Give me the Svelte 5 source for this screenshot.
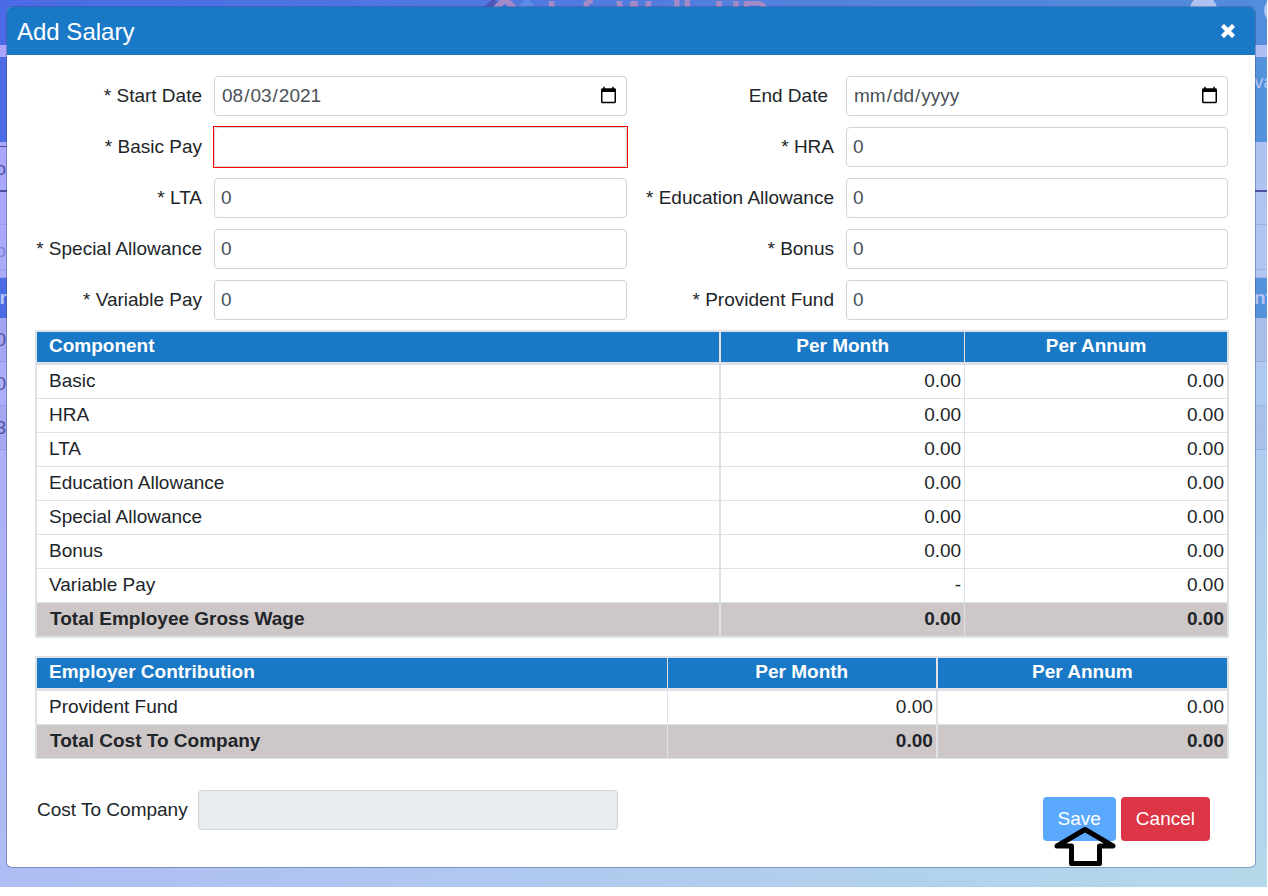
<script>
  const rows = ['Basic', 'HRA', 'LTA', 'Education Allowance', 'Special Allowance', 'Bonus', 'Variable Pay'];
  const fields = [
    { id: 'start', label: '* Start Date', type: 'date', value: '2021-08-03' },
    { id: 'end', label: 'End Date', type: 'date', value: '' },
    { id: 'basic', label: '* Basic Pay', type: 'text', value: '', invalid: true },
    { id: 'hra', label: '* HRA', type: 'text', value: '0' },
    { id: 'lta', label: '* LTA', type: 'text', value: '0' },
    { id: 'education', label: '* Education Allowance', type: 'text', value: '0' },
    { id: 'special', label: '* Special Allowance', type: 'text', value: '0' },
    { id: 'bonus', label: '* Bonus', type: 'text', value: '0' },
    { id: 'variable', label: '* Variable Pay', type: 'text', value: '0' },
    { id: 'provident', label: '* Provident Fund', type: 'text', value: '0' }
  ];
</script>

<div class="screen">
  <div class="backdrop" aria-hidden="true">
    <div class="band top">
      <svg class="logo" width="64" height="24" viewBox="0 0 64 24">
        <path d="M0 10 10 0H14L24 10Z" fill="#4c58b8" />
        <path d="M34 10 44 0H48L58 10Z" fill="#5c8be6" />
        <path d="M12 11 24 -1 36 11" fill="none" stroke="#a58bc6" stroke-width="6" />
      </svg>
      <span class="brand">InfoWalk HR</span>
      <span class="avatar"></span>
      <span class="avatar edge"></span>
    </div>
    <div class="strip"></div>
    <div class="band menu"><span></span><span>va</span></div>
    <div class="line tabs"><span>o</span></div>
    <div class="line gap"></div>
    <div class="line name"><span>o</span></div>
    <div class="line spacer"></div>
    <div class="band heads"><b>ar</b><b>nt</b></div>
    <div class="line item odd"><span>0</span></div>
    <div class="line item"><span>0</span></div>
    <div class="line item odd"><span>3</span></div>
  </div>

  <div class="modal" role="dialog" aria-labelledby="title">
    <header>
      <h1 id="title">Add Salary</h1>
      <button class="close" type="button" aria-label="Close">
        <svg width="14" height="14" viewBox="0 0 14 14"><path d="M3 3 11 11M11 3 3 11" stroke="#fff" stroke-width="4.4" stroke-linecap="square" /></svg>
      </button>
    </header>

    <form onsubmit={(e) => e.preventDefault()}>
      <div class="fields">
        {#each fields as f}
          <label for={f.id} class:optional={f.id === 'end'}>{f.label}</label>
          <div class="box" class:invalid={f.invalid}>
            <input id={f.id} type={f.type} value={f.value} />
          </div>
        {/each}
      </div>

      <table class="wages">
        <thead><tr><th>Component</th><th>Per Month</th><th>Per Annum</th></tr></thead>
        <tbody>
          {#each rows as r}
            <tr><td>{r}</td><td>{r === 'Variable Pay' ? '-' : '0.00'}</td><td>0.00</td></tr>
          {/each}
          <tr class="total"><td>Total Employee Gross Wage</td><td>0.00</td><td>0.00</td></tr>
        </tbody>
      </table>

      <table class="employer">
        <thead><tr><th>Employer Contribution</th><th>Per Month</th><th>Per Annum</th></tr></thead>
        <tbody>
          <tr><td>Provident Fund</td><td>0.00</td><td>0.00</td></tr>
          <tr class="total"><td>Total Cost To Company</td><td>0.00</td><td>0.00</td></tr>
        </tbody>
      </table>

      <div class="footer">
        <label for="ctc">Cost To Company</label>
        <input id="ctc" type="text" disabled />
        <div class="actions">
          <div class="save-wrap">
            <button class="save" type="submit">Save</button>
            <svg class="arrow" width="62" height="40" viewBox="0 0 62 40">
              <path d="M31 2.5 59 19H45.500V36.500H17.500V19H3Z" fill="none" stroke="#000" stroke-width="5" stroke-linejoin="round" />
            </svg>
          </div>
          <button class="cancel" type="button">Cancel</button>
        </div>
      </div>
    </form>
  </div>
</div>

<style>
  :global(body) {
    margin: 0;
    background: #fff;
  }
  .screen,
  .screen * {
    box-sizing: border-box;
  }
  .screen {
    position: relative;
    margin-right: 1px;
    padding: 7px 12px 20px 7px;
    overflow: hidden;
    background: linear-gradient(to bottom right, #a9a2fc, #b3d9ea);
    color: #212529;
    font: 19px/29px "Liberation Sans", Arial, sans-serif;
  }
  .backdrop {
    position: absolute;
    inset: 0;
    color: #5055a8;
  }
  .band {
    display: flex;
    justify-content: space-between;
    background: linear-gradient(to right, #4a6be4, #5492da);
    color: #b4c4f2;
  }
  .top {
    position: relative;
    height: 45px;
    overflow: hidden;
    background: linear-gradient(to right, #4a6be4, #5380de 60%, #528cdb);
  }
  .logo {
    position: absolute;
    left: 481px;
    top: 0;
  }
  .brand {
    position: absolute;
    left: 546px;
    top: -4px;
    color: #a58bc6;
    font-size: 38px;
    font-weight: bold;
    line-height: 38px;
  }
  .avatar {
    position: absolute;
    right: 50px;
    top: -4px;
    width: 27px;
    height: 27px;
    border-radius: 50%;
    background: #b0c2f2;
  }
  .edge {
    right: -24px;
    top: -3px;
  }
  .strip {
    height: 12px;
  }
  .menu {
    height: 85px;
    padding-top: 10px;
  }
  .menu span,
  .heads b {
    width: 13px;
    overflow: hidden;
  }
  .heads b:first-child {
    display: flex;
    width: 7px;
    justify-content: flex-end;
  }
  .line {
    border-bottom: 1px solid rgba(80, 90, 190, 0.18);
  }
  .line span {
    display: flex;
    width: 6px;
    justify-content: flex-end;
  }
  .tabs {
    height: 50px;
    padding-top: 12px;
    border-bottom: 2px solid #4a50a0;
    background: linear-gradient(#4a50a0, #4a50a0) 0 4px / 7px 1px no-repeat;
  }
  .gap {
    height: 33px;
  }
  .name {
    height: 45px;
    padding-top: 11px;
    color: #8082d4;
  }
  .spacer {
    height: 8px;
  }
  .heads {
    height: 40px;
    padding-top: 5px;
  }
  .item {
    height: 44px;
    padding-top: 7px;
  }
  .odd {
    background: rgba(110, 110, 170, 0.1);
  }
  .modal {
    position: relative;
    border-radius: 5px;
    background: #fff;
    box-shadow: 0 0 0 1px rgba(50, 70, 130, 0.4);
  }
  header {
    display: flex;
    align-items: center;
    justify-content: space-between;
    height: 48px;
    padding: 0 20px 0 10px;
    border-radius: 5px 5px 0 0;
    background: #1a79c6;
    color: #fff;
  }
  h1 {
    margin: 0;
    font-size: 24px;
    font-weight: normal;
  }
  button {
    font: inherit;
    color: #fff;
    border: 0;
    border-radius: 4px;
  }
  .close {
    display: flex;
    padding: 0;
    background: none;
  }
  form {
    padding: 21px 26px 26px 28px;
  }
  .fields {
    display: grid;
    grid-template-columns: 179px 413fr 219px 382fr;
    gap: 11px 0;
    padding-right: 1px;
  }
  .fields label {
    padding: 5px 12px 0 0;
    text-align: right;
  }
  .fields .optional {
    padding-right: 18px;
  }
  .invalid {
    height: 40px;
    outline: 1px solid #f00;
  }
  input {
    display: block;
    width: 100%;
    height: 40px;
    padding: 0 6px 1px;
    border: 1px solid #ced4da;
    border-radius: 4px;
    background: #fff;
    color: #495057;
    font: inherit;
  }
  table {
    width: 100%;
    table-layout: fixed;
    border: 2px solid #dee2e6;
    border-collapse: separate;
    border-spacing: 0;
  }
  .wages {
    margin-top: 10px;
  }
  .employer {
    margin-top: 18px;
    border-bottom-width: 1px;
  }
  th,
  td {
    height: 34px;
    padding: 0 3px 2px;
    border-right: 1px solid #dee2e6;
    border-bottom: 1px solid #dee2e6;
    text-align: right;
  }
  th {
    height: 33px;
    padding-bottom: 2px;
    border-bottom-width: 3px;
    background: #1a79c6;
    color: #fff;
    text-align: center;
    line-height: 28px;
  }
  th:first-child,
  td:first-child {
    padding-left: 12px;
    text-align: left;
  }
  th:last-child,
  td:last-child {
    border-right: 0;
  }
  .wages :is(th, td):first-child,
  .employer :is(th, td):nth-child(2) {
    border-right-width: 2px;
  }
  .wages th:first-child {
    width: 57.5%;
  }
  .wages th:nth-child(2) {
    width: 20.5%;
  }
  .employer th:first-child {
    width: 53%;
  }
  .employer th:nth-child(2) {
    width: 22.7%;
  }
  .total td {
    height: 33px;
    padding-bottom: 2px;
    border-bottom: 0;
    background: #cdc7c7;
    font-weight: bold;
  }
  .total td:first-child {
    padding-left: 13px;
  }
  .footer {
    display: flex;
    align-items: center;
    height: 51px;
    margin-top: 31px;
    padding: 0 19px 0 2px;
  }
  .footer label,
  .footer input {
    align-self: flex-start;
  }
  .footer label {
    width: 161px;
    padding-top: 5px;
  }
  .footer input {
    width: 35.8%;
    background: #e9ecef;
  }
  .actions {
    display: flex;
    gap: 5px;
    align-self: flex-end;
    margin-left: auto;
  }
  .save-wrap {
    position: relative;
  }
  .actions button {
    height: 44px;
    padding: 0 15px 2px;
  }
  .save {
    background: #5aa9ff;
  }
  .cancel {
    background: #dc3545;
  }
  .arrow {
    position: absolute;
    left: 11px;
    top: 30px;
  }
</style>
